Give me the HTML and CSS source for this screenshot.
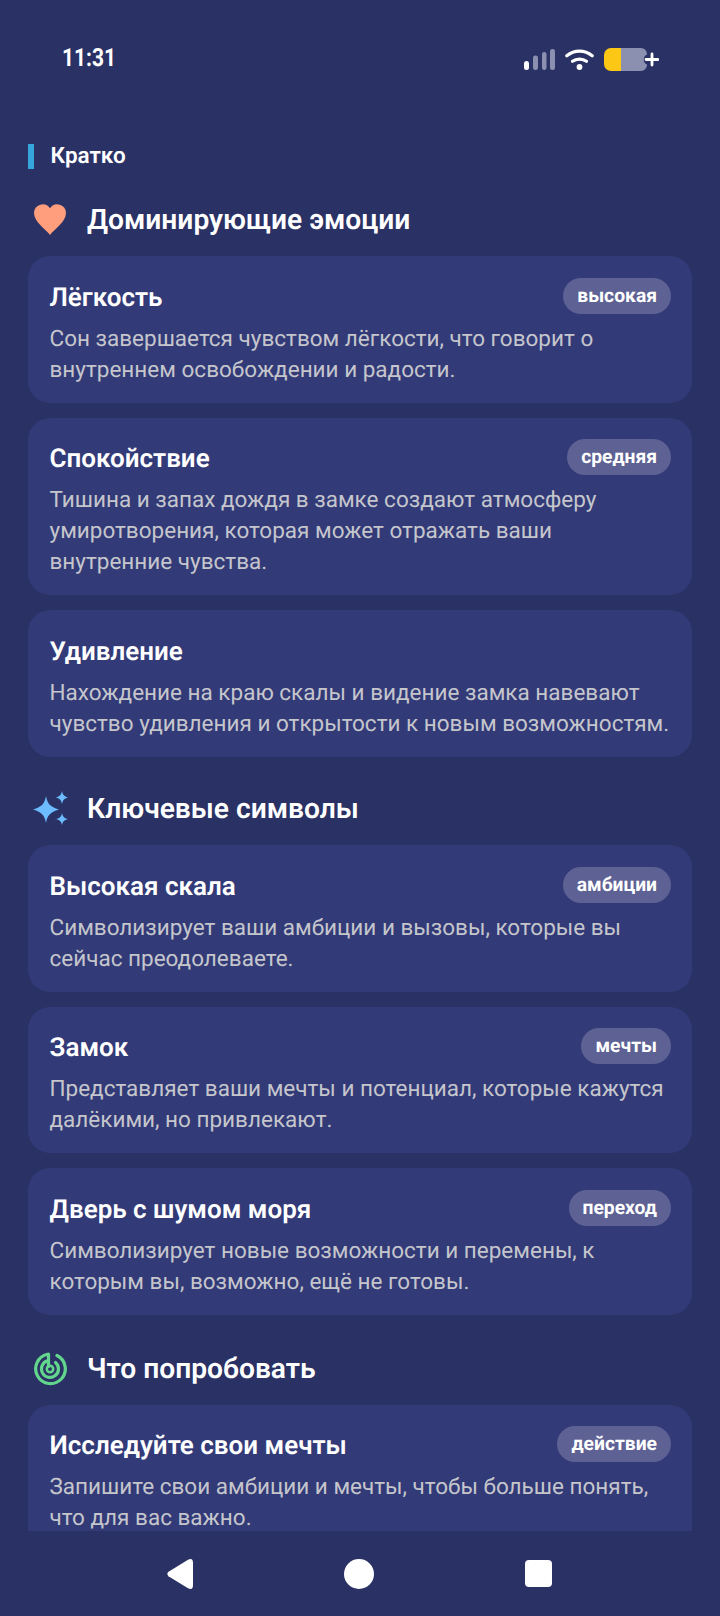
FILE: index.html
```html
<!DOCTYPE html>
<html lang="ru">
<head>
<meta charset="utf-8">
<title>Кратко</title>
<link rel="stylesheet" href="styles.css">
</head>
<body>
<div class="phone">
  <header class="status">
    <span class="time">11:31</span>
    <div class="status-icons">
      <svg width="31" height="21" viewBox="0 0 31 21"><rect x="0" y="12" width="5" height="9" rx="2.500" fill="#fff"/><rect x="9" y="6.500" width="5" height="14.500" rx="2.300" fill="#8b8fb0"/><rect x="18" y="3" width="4.500" height="18" rx="2.200" fill="#8b8fb0"/><rect x="26" y="0" width="5" height="21" rx="2.300" fill="#8b8fb0"/></svg>
      <svg width="29" height="21" viewBox="0 0 29 21"><path d="M1.800 6.800C9.500 .6 19.500 .6 27.200 6.800" fill="none" stroke="#fff" stroke-width="3.200" stroke-linecap="round"/><path d="M7.500 12.300C11.500 9.300 17.500 9.300 21.500 12.300" fill="none" stroke="#fff" stroke-width="3.200" stroke-linecap="round"/><circle cx="14.500" cy="18" r="2.900" fill="#fff"/></svg>
      <svg width="55" height="23" viewBox="0 0 55 23"><path d="M7 0H17V23H7A7 7 0 0 1 0 16V7A7 7 0 0 1 7 0Z" fill="#fcc815"/><path d="M17 0H37A6 6 0 0 1 43 6V6.500A5.500 5.500 0 0 0 43 16.500V17A6 6 0 0 1 37 23H17Z" fill="#8b8fb0"/><path d="M42 11.500H54M48 6V17" stroke="#fff" stroke-width="2.800" stroke-linecap="round"/></svg>
    </div>
  </header>

  <main class="content">
    <div class="summary"><span class="summary-bar"></span><span class="summary-text">Кратко</span></div>

    <section class="group">
      <h2 class="group-title">
        <svg class="group-icon" width="36" height="36" viewBox="0 0 36 36"><path d="M18 33C14 27.500 2 20 2 11A8.800 8.800 0 0 1 18 6.200 8.800 8.800 0 0 1 34 11C34 20 22 27.500 18 33Z" fill="#ff9e7c"/></svg>
        Доминирующие эмоции
      </h2>
      <article class="card">
        <div class="card-head"><h3 class="card-title">Лёгкость</h3><span class="tag">высокая</span></div>
        <p class="card-text">Сон завершается чувством лёгкости, что говорит о внутреннем освобождении и радости.</p>
      </article>
      <article class="card">
        <div class="card-head"><h3 class="card-title">Спокойствие</h3><span class="tag">средняя</span></div>
        <p class="card-text">Тишина и запах дождя в замке создают атмосферу умиротворения, которая может отражать ваши внутренние чувства.</p>
      </article>
      <article class="card">
        <div class="card-head"><h3 class="card-title">Удивление</h3></div>
        <p class="card-text">Нахождение на краю скалы и видение замка навевают чувство удивления и открытости к новым возможностям.</p>
      </article>
    </section>

    <section class="group">
      <h2 class="group-title">
        <svg class="group-icon" width="36" height="36" viewBox="0 0 36 36"><path d="M14 5C15.500 13 18 15.500 27 18.500 18 21.500 15.500 24 14 32 12.500 24 10 21.500 1 18.500 10 15.500 12.500 13 14 5Z" fill="#6cbcff"/><path d="M30 0C30.800 3.800 32 5.200 36 6.500 32 7.800 30.800 9.200 30 13 29.200 9.200 28 7.800 24 6.500 28 5.200 29.200 3.800 30 0Z" fill="#6cbcff"/><path d="M30 22C30.800 25.800 32 27.200 36 28 32 29.300 30.800 30.400 30 34 29.200 30.400 28 29.300 24 28 28 27.200 29.200 25.800 30 22Z" fill="#6cbcff"/></svg>
        Ключевые символы
      </h2>
      <article class="card">
        <div class="card-head"><h3 class="card-title">Высокая скала</h3><span class="tag">амбиции</span></div>
        <p class="card-text">Символизирует ваши амбиции и вызовы, которые вы сейчас преодолеваете.</p>
      </article>
      <article class="card">
        <div class="card-head"><h3 class="card-title">Замок</h3><span class="tag">мечты</span></div>
        <p class="card-text">Представляет ваши мечты и потенциал, которые кажутся далёкими, но привлекают.</p>
      </article>
      <article class="card">
        <div class="card-head"><h3 class="card-title">Дверь с шумом моря</h3><span class="tag">переход</span></div>
        <p class="card-text">Символизирует новые возможности и перемены, к которым вы, возможно, ещё не готовы.</p>
      </article>
    </section>

    <section class="group">
      <h2 class="group-title">
        <svg class="group-icon" width="36" height="36" viewBox="0 0 36 36"><g fill="none" stroke="#63d68d" stroke-width="3.200" stroke-linecap="round"><path d="M25 4.500A14.800 14.800 0 1 1 15.500 3.300"/><path d="M23.500 11.500A8.500 8.500 0 1 1 15.500 9.800"/><path d="M16.500 3V15.500"/></g><circle cx="18" cy="18" r="3.200" fill="none" stroke="#63d68d" stroke-width="2.600"/></svg>
        Что попробовать
      </h2>
      <article class="card">
        <div class="card-head"><h3 class="card-title">Исследуйте свои мечты</h3><span class="tag">действие</span></div>
        <p class="card-text">Запишите свои амбиции и мечты, чтобы больше понять, что для вас важно.</p>
      </article>
    </section>
  </main>

  <nav class="navbar">
    <svg width="26" height="30" viewBox="0 0 26 30"><path d="M1.500 12.800 21 .8Q26 -1.500 26 4V26Q26 31.500 21 29.200L1.500 17.200Q-.8 15 1.500 12.800Z" fill="#fff"/></svg>
    <svg width="30" height="30" viewBox="0 0 30 30"><circle cx="15" cy="15" r="15" fill="#fff"/></svg>
    <svg width="27" height="27" viewBox="0 0 27 27"><rect width="27" height="27" rx="4" fill="#fff"/></svg>
  </nav>
</div>
</body>
</html>
```
FILE: styles.css
```css
* { box-sizing: border-box; }
html, body { margin: 0; padding: 0; }
body { background: #2a3164; font-family: Roboto, "Noto Sans", sans-serif; color: #fff; text-rendering: geometricPrecision; }
.phone { width: 720px; height: 1616px; display: flex; flex-direction: column; overflow: hidden; background: #2a3164; }
.status { flex: none; height: 135px; padding: 43px 61px 0 62px; display: flex; justify-content: space-between; align-items: flex-start; }
.time { font-size: 25px; line-height: 32px; font-weight: 700; display: inline-block; transform: scaleX(.84); transform-origin: left center; }
.status-icons { display: flex; align-items: center; gap: 10px; height: 32px; }
.content { flex: 1; min-height: 0; overflow: hidden; padding: 0 28px; }
.summary { display: flex; align-items: center; gap: 17px; height: 26px; margin-top: 8px; }
.summary-bar { width: 5.500px; height: 25px; background: #35a5dc; }
.summary-text { font-size: 22.500px; line-height: 28px; font-weight: 600; }
.group { display: flex; flex-direction: column; gap: 15px; margin-bottom: 33.500px; }
.group:first-of-type { margin-top: 32px; }
.group:last-of-type { margin-top: 35px; }
.group-title { margin: 0 0 2px; padding-left: 4px; height: 38px; display: flex; align-items: center; gap: 19px; font-size: 28.200px; line-height: 38px; font-weight: 600; }
.group-icon { flex: none; }
.card { background: #323a78; border-radius: 22px; padding: 21.500px 21px 17px 21.500px; }
.card-head { display: flex; justify-content: space-between; align-items: flex-start; height: 36px; }
.card-title { margin: 0; font-size: 26px; line-height: 40px; font-weight: 600; }
.tag { height: 36px; padding: 0 14px; border-radius: 18px; background: #5d6193; font-size: 19.300px; line-height: 36px; font-weight: 700; }
.card-text { margin: 10px 0 0; font-size: 22.500px; line-height: 31px; color: #c5c6cc; }
.navbar { flex: none; height: 85px; padding: 0 168px 0 167px; display: flex; justify-content: space-between; align-items: center; background: #2a3164; }
```
